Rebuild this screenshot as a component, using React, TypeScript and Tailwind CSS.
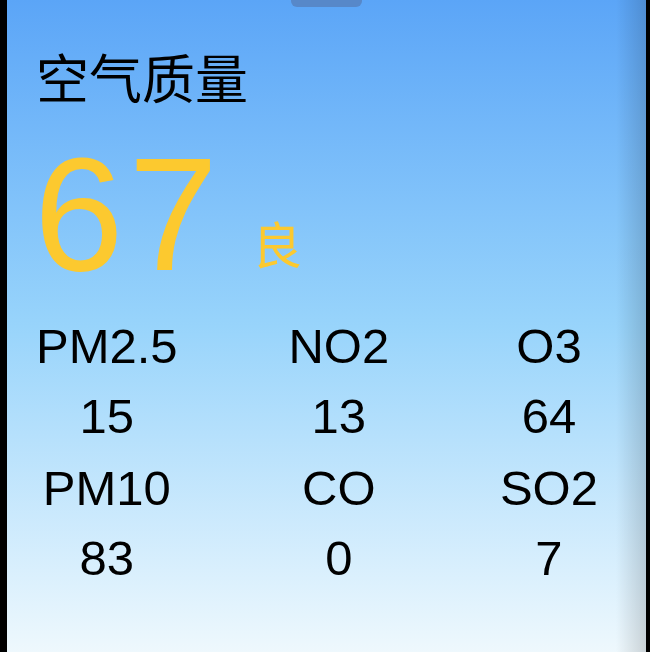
import React from "react";

const pollutants: { name: string; value: number }[] = [
    { name: "PM2.5", value: 15 },
    { name: "NO2", value: 13 },
    { name: "O3", value: 64 },
    { name: "PM10", value: 83 },
    { name: "CO", value: 0 },
    { name: "SO2", value: 7 },
];

const App: React.FC = () => {
    const firstRow = pollutants.slice(0, 3);
    const secondRow = pollutants.slice(3);

    return (
        <div
            className="w-[650px] h-[652px] bg-black flex overflow-hidden"
            style={{ fontFamily: '"Liberation Sans", "Noto Sans CJK SC", sans-serif' }}
        >
            {/* Sheet */}
            <div className="relative ml-[7px] w-[639px] h-full overflow-hidden bg-gradient-to-b from-[#5ba5f7] via-[#98d4fb] to-[#eef8fd]">
                {/* Drag handle */}
                <div className="absolute top-0 left-[284px] w-[71px] h-[7px] rounded-b-md bg-[#5788c9]" />

                <div className="pl-[29px] pr-[48px] pt-[54px] text-black">
                    <div className="text-[53px] leading-none">空气质量</div>

                    {/* AQI */}
                    <div className="flex items-end mt-[27px] -ml-[2px]">
                        <span className="text-[161px] leading-none tracking-[5px] text-[#fcc92f]">67</span>
                        <span className="ml-[29px] mb-[23px] text-[50px] leading-none text-[#fcc92f]">良</span>
                    </div>

                    {/* Pollutants */}
                    <div className="mt-[16px] grid grid-cols-[repeat(3,auto)] justify-between text-center text-[49px] leading-[70px]">
                        {firstRow.map((p) => (
                            <div key={p.name}>{p.name}</div>
                        ))}
                        {firstRow.map((p) => (
                            <div key={p.name + "-v"}>{p.value}</div>
                        ))}
                        {secondRow.map((p) => (
                            <div key={p.name} className="mt-[2px]">{p.name}</div>
                        ))}
                        {secondRow.map((p) => (
                            <div key={p.name + "-v"}>{p.value}</div>
                        ))}
                    </div>
                </div>

                {/* Edge shadow */}
                <div className="absolute inset-y-0 right-0 w-[30px] bg-gradient-to-r from-transparent to-black/15" />
            </div>
        </div>
    );
};

export default App;
